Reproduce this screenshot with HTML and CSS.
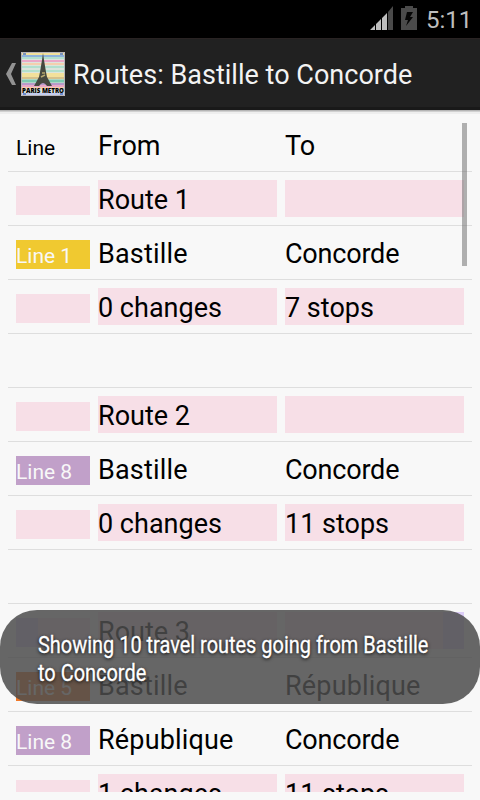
FILE: index.html
```html
<!DOCTYPE html>
<html lang="en">
<head>
<meta charset="utf-8">
<title>Routes: Bastille to Concorde</title>
<link rel="stylesheet" href="styles.css">
</head>
<body>
<div class="status">
  <svg class="signal" width="23" height="24" viewBox="0 0 23 24"><path fill="#bebebe" d="M0 24L5 19V24ZM6 24V18L11 13V24ZM12 24V12L17 7V24Z"/><path fill="#4a4a4a" d="M18 24V6L23 0V24Z"/></svg>
  <svg class="battery" width="16" height="24" viewBox="0 0 16 24"><path fill="#4b4b4b" d="M4 0H12V2H16V24H0V2H4Z"/><path fill="#050505" d="M6 6H12L9 11H12L5 20L7 14H4Z"/></svg>
  <span class="clock">5:11</span>
</div>
<header class="bar">
  <svg class="back" width="11" height="22" viewBox="0 0 11 22"><path fill="#929292" d="M6 0H10L5 11L10 22H6L0 11Z"/></svg>
  <svg class="logo" width="44" height="44" viewBox="0 0 44 44">
    <rect width="44" height="44" fill="#dce4dc"/>
    <path stroke="#f2e09b" stroke-width="2" d="M0 2H44M0 22H44M0 24H44"/>
    <path stroke="#8fb3dc" stroke-width="2" d="M0 4H44"/>
    <path stroke="#c3cdf0" stroke-width="2" d="M0 42H44"/>
    <path stroke="#eaa8c8" stroke-width="2" d="M0 9H44M0 34H44"/>
    <path stroke="#f4cfae" stroke-width="2" d="M0 12H44M0 36H44"/>
    <path stroke="#d5c18c" stroke-width="2" d="M0 26H44"/>
    <path stroke="#b2dfcd" stroke-width="2" d="M0 6H44M0 15H44M0 19H44"/>
    <path stroke="#7cc9b0" stroke-width="3" d="M0 29H44"/>
    <path stroke="#b89bc9" stroke-width="2" d="M0 32H44"/>
    <path stroke="#5377c4" stroke-width="1.500" d="M2 2H5M39 2H42M2 42H5M39 42H42"/>
    <path fill="none" stroke="#b8b5b8" d="M.5 .5H43.500V43.500H.5Z"/>
    <path fill="#45483f" d="M22 1L23 8L25 20L26 25L31 34H26Q22 28 18 34H13L18 25L19 20L21 8Z"/>
    <path stroke="#b5a86e" stroke-width="1.500" d="M21 21H24M20 25L24 23"/>
    <text x="1" y="40.500" textLength="42" lengthAdjust="spacingAndGlyphs" class="logo-text">PARIS METRO</text>
  </svg>
  <h1 class="title">Routes: Bastille to Concorde</h1>
</header>
<main class="list">
  <div class="row head"><span class="line">Line</span><span>From</span><span>To</span></div>
  <div class="row tint"><span class="line"></span><span>Route 1</span><span></span></div>
  <div class="row"><span class="line yellow">Line 1</span><span class="wide">Bastille</span><span class="tight">Concorde</span></div>
  <div class="row tint"><span class="line"></span><span>0 changes</span><span>7 stops</span></div>
  <div class="row"></div>
  <div class="row tint"><span class="line"></span><span>Route 2</span><span></span></div>
  <div class="row"><span class="line purple">Line 8</span><span class="wide">Bastille</span><span class="tight">Concorde</span></div>
  <div class="row tint"><span class="line"></span><span>0 changes</span><span>11 stops</span></div>
  <div class="row"></div>
  <div class="row tint"><span class="line fade-left"></span><span>Route 3</span><span class="fade-right"></span></div>
  <div class="row"><span class="line orange">Line 5</span><span class="wide">Bastille</span><span class="wide">République</span></div>
  <div class="row"><span class="line purple">Line 8</span><span class="wide">République</span><span class="tight">Concorde</span></div>
  <div class="row tint"><span class="line"></span><span>1 changes</span><span>11 stops</span></div>
</main>
<div class="scrollbar"></div>
<div class="toast"><p>Showing 10 travel routes going from Bastille<br>to Concorde</p></div>
</body>
</html>
```
FILE: styles.css
```css
* { box-sizing: border-box; }
body { margin: 0; width: 480px; height: 800px; overflow: hidden; background: #f8f8f8; font-family: Roboto, sans-serif; color: #000; }
.status { height: 38px; background: #000; display: flex; justify-content: flex-end; align-items: flex-start; padding: 6px 10px 0 0; }
.battery { margin-left: 8px; }
.clock { margin-left: 9px; width: 44px; font-size: 24px; line-height: 29px; color: #bebebe; white-space: nowrap; }
.bar { height: 72px; background: #212121; border-top: 1px solid #292323; border-bottom: 3px solid #191919; box-shadow: 0 1px 0 #b5b5b5, 0 2px 0 #d0d0d0, 0 4px 0 #eeeeee; display: flex; align-items: center; padding: 2px 0 0 6px; }
.logo { margin-left: 4px; }
.logo-text { font-family: "Open Sans", sans-serif; font-size: 6px; font-weight: 800; fill: #000; }
.title { margin: 2px 0 0 8px; font-size: 27px; line-height: 32px; font-weight: 400; color: #f3f3f3; white-space: nowrap; letter-spacing: .02px; }
.list { height: 674px; margin: 8px 8px 0; overflow: hidden; }
.row { height: 54px; border-bottom: 1px solid #dedede; display: grid; grid-template-columns: 74px 179px 179px; column-gap: 8px; padding: 8px; align-items: start; font-size: 27px; line-height: 40px; white-space: nowrap; }
.row span { height: 37px; }
.row .line { height: 29px; margin-top: 6px; font-size: 21px; line-height: 33px; }
.row .wide { letter-spacing: .17px; }
.row .tight { letter-spacing: -.2px; }
.tint span { background: #f7dfe7; }
.yellow, .purple, .orange { color: #f8f8f8; }
.yellow { background: #f0c930; }
.purple { background: #c1a0c9; }
.orange { background: #f07828; }
.tint .fade-left { background: linear-gradient(90deg, #dccdf7 22px, #f7dfe7 22px); }
.tint .fade-right { background: linear-gradient(90deg, #f7dfe7 158px, #dccdf7 158px); }
.scrollbar { position: absolute; left: 462px; top: 123px; width: 5px; height: 143px; background: rgba(110,110,110,.53); }
.toast { position: absolute; left: 0; top: 610px; width: 480px; height: 94px; border-radius: 37px; background: rgba(76,76,76,.85); padding: 21px 38px; }
.toast p { margin: 0; width: max-content; font-size: 24px; line-height: 28px; font-weight: 400; color: #fff; -webkit-text-stroke: .3px #fff; white-space: nowrap; text-shadow: 0 1px 4px #000; transform: scaleX(.831); transform-origin: left; }
```
